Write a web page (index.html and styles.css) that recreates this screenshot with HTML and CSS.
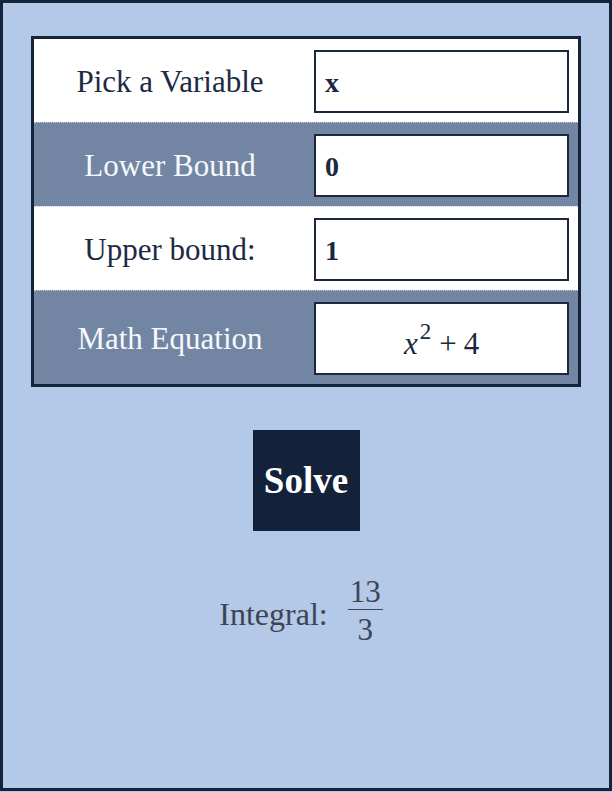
FILE: index.html
```html
<!DOCTYPE html>
<html>
<head>
<meta charset="utf-8">
<link rel="stylesheet" href="styles.css">
</head>
<body>
<div class="frame">
  <div class="form">
    <div class="row light">
      <div class="label">Pick a Variable</div>
      <div class="cell"><div class="field">x</div></div>
    </div>
    <div class="row dark">
      <div class="label">Lower Bound</div>
      <div class="cell"><div class="field">0</div></div>
    </div>
    <div class="row light">
      <div class="label">Upper bound:</div>
      <div class="cell"><div class="field">1</div></div>
    </div>
    <div class="row dark">
      <div class="label">Math Equation</div>
      <div class="cell"><div class="field math"><span class="var">x</span><sup class="exp">2</sup><span class="op">+</span><span>4</span></div></div>
    </div>
  </div>
  <div class="actions">
    <button class="solve">Solve</button>
  </div>
  <div class="result">
    <span class="result-label">Integral:</span>
    <span class="frac">
      <span class="num">13</span>
      <span class="den">3</span>
    </span>
  </div>
</div>
</body>
</html>
```

FILE: styles.css
```css
* { box-sizing: border-box; }
html, body { margin: 0; padding: 0; }
body {
  width: 612px;
  height: 792px;
  background: #b4c8e8;
  font-family: "Liberation Serif", "Times New Roman", serif;
}
.frame {
  width: 612px;
  height: 791px;
  border: 3px solid #14233a;
  background: #b4c8e8;
  padding: 33px 28px 0 28px;
}
.form {
  border: 3px solid #14233a;
  background: #ffffff;
}
.row {
  display: grid;
  grid-template-columns: 272px 1fr;
  align-items: center;
}
.row + .row { border-top: 1px dotted #c9ced8; }
.row.light { background: #ffffff; }
.row.dark { background: #7286a3; }
.label {
  text-align: center;
  font-size: 31px;
  line-height: 36px;
  padding-top: 2px;
}
.light .label { color: #1d2a44; }
.dark .label { color: #f6f8fb; }
.cell {
  padding: 11px 9px 9px 8px;
}
.field {
  height: 63px;
  background: #ffffff;
  border: 2px solid #1b2840;
  font-size: 28px;
  font-weight: bold;
  color: #1b2840;
  padding: 16px 0 0 9px;
  line-height: 30px;
}
.field.math {
  height: 73px;
  font-weight: normal;
  font-size: 31px;
  color: #1b2840;
  text-align: center;
  padding: 24px 0 0 0;
  line-height: 32px;
}
.var {
  font-style: italic;
  font-family: "Liberation Serif", "Times New Roman", serif;
}
.exp {
  font-size: 23px;
  vertical-align: 0;
  position: relative;
  top: -15px;
  margin-left: 2px;
}
.op { margin: 0 7px 0 8px; }
.actions {
  display: flex;
  justify-content: center;
  margin-top: 43px;
}
.solve {
  width: 107px;
  height: 101px;
  border: none;
  background: #13223a;
  color: #ffffff;
  font-family: "Liberation Serif", "Times New Roman", serif;
  font-weight: bold;
  font-size: 37px;
  padding: 0;
  cursor: pointer;
}
.result {
  display: flex;
  justify-content: center;
  align-items: center;
  margin-top: 47px;
  color: #3d4454;
  padding-right: 10px;
}
.result-label {
  font-size: 32px;
  margin-top: 6px;
}
.frac {
  display: inline-flex;
  flex-direction: column;
  align-items: center;
  margin-left: 20px;
  font-size: 31px;
  line-height: 28px;
}
.num {
  padding: 0 2px 3px;
  border-bottom: 1.5px solid #3d4454;
}
.den {
  padding-top: 6px;
}
```
